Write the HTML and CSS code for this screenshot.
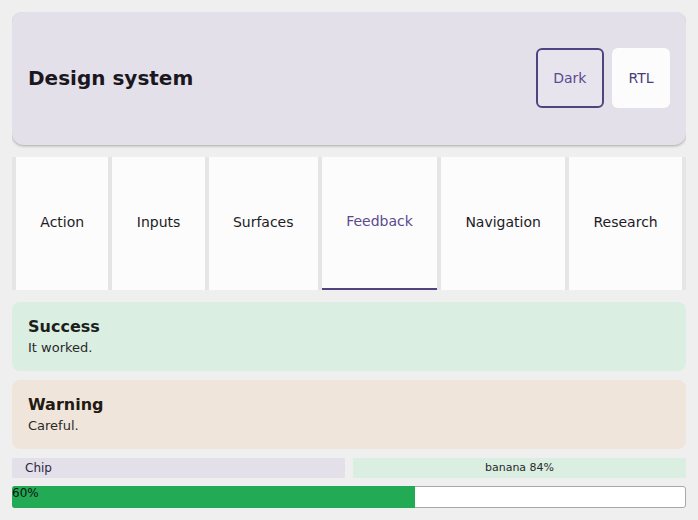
FILE: index.html
```html
<!DOCTYPE html>
<html lang="en">
<head>
    <meta charset="UTF-8">
    <title>Design system</title>
    <link rel="stylesheet" href="styles.css">
</head>
<body>
    <div class="header">
        <h1 class="title">Design system</h1>
        <div class="tools">
            <button class="btn btn-on">Dark</button>
            <button class="btn">RTL</button>
        </div>
    </div>

    <div class="tabs">
        <div class="tab">Action</div>
        <div class="tab">Inputs</div>
        <div class="tab">Surfaces</div>
        <div class="tab on">Feedback</div>
        <div class="tab">Navigation</div>
        <div class="tab">Research</div>
    </div>

    <div class="alert success">
        <div class="alert-title">Success</div>
        <div class="alert-text">It worked.</div>
    </div>
    <div class="alert warning">
        <div class="alert-title">Warning</div>
        <div class="alert-text">Careful.</div>
    </div>

    <div class="chips">
        <div class="chip">Chip</div>
        <div class="chip chip-green">banana 84%</div>
    </div>

    <div class="progress">
        <div class="progress-fill" style="width:60%">60%</div>
    </div>
</body>
</html>
```

FILE: styles.css
```css
*{margin:0;padding:0;box-sizing:border-box;}
body{
    margin:12px;
    background:#efefef;
    font-family:"DejaVu Sans",sans-serif;
    color:#1d1b26;
}
.header{
    display:flex;
    align-items:center;
    justify-content:space-between;
    height:133px;
    padding:0 16px 2px;
    background:#e3e0ea;
    border-radius:12px;
    box-shadow:0 1px 3px rgba(0,0,0,.3);
}
.title{
    font-size:20px;
    font-weight:bold;
    color:#1a1720;
}
.tools{
    display:flex;
    gap:8px;
}
.btn{
    height:60px;
    padding:0 16.5px;
    border:none;
    border-radius:6px;
    background:#fcfcfd;
    font-family:"DejaVu Sans",sans-serif;
    font-size:14px;
    color:#4a3d7a;
}
.btn-on{
    padding:0 15.5px;
    border:2px solid #51437f;
    background:#e7e4ee;
    color:#5b4a8f;
}
.tabs{
    display:flex;
    gap:4px;
    margin-top:12px;
    padding:0 4px;
    height:133px;
    background:#e5e5e5;
}
.tab{
    flex:1 1 auto;
    display:flex;
    align-items:center;
    justify-content:center;
    padding:0 24px 3px;
    background:#fcfcfc;
    font-size:14px;
    color:#1d1b26;
}
.tab.on{
    color:#5b4a8f;
    border-bottom:2px solid #51437f;
    padding-bottom:4px;
}
.alert{
    margin-top:12px;
    padding:14px 16px;
    border-radius:8px;
}
.alert + .alert{margin-top:9px;}
.success{background:#dbeee2;}
.warning{background:#f0e5da;}
.alert-title{
    font-size:16px;
    line-height:22px;
    font-weight:bold;
    color:#1a1f1c;
}
.warning .alert-title{color:#221a14;}
.alert-text{
    font-size:13px;
    line-height:19px;
    color:#2a2a2a;
}
.chips{
    display:flex;
    gap:8px;
    margin-top:9px;
}
.chip{
    flex:1;
    height:20px;
    line-height:20px;
    padding:0 13px;
    background:#e3e0ea;
    font-size:12px;
    color:#2a2840;
}
.chip-green{
    background:#dbeee2;
    text-align:center;
    font-size:11px;
    color:#2a2a2a;
}
.progress{
    margin-top:8px;
    height:22px;
    border:1px solid #a8a8a8;
    border-radius:3px;
    background:#fff;
}
.progress-fill{
    height:22px;
    margin:-1px 0 0 -1px;
    background:#22aa55;
    border-radius:3px 0 0 3px;
    font-size:12px;
    line-height:14px;
    color:#111;
}
```
